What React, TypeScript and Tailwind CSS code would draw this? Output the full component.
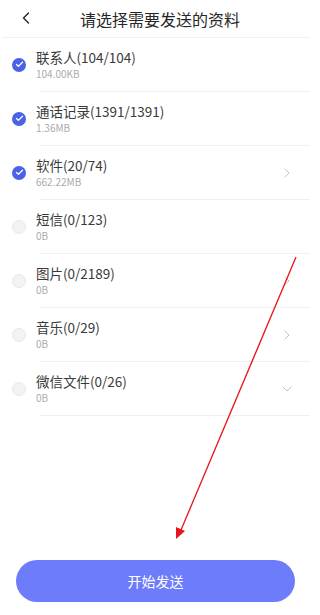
import { ChevronLeft, ChevronRight, ChevronDown, Check } from 'lucide-react';

type Item = { name: string; size: string; checked: boolean; tail: 'right' | 'down' | null };

const items: Item[] = [
  { name: '联系人(104/104)', size: '104.00KB', checked: true, tail: null },
  { name: '通话记录(1391/1391)', size: '1.36MB', checked: true, tail: null },
  { name: '软件(20/74)', size: '662.22MB', checked: true, tail: 'right' },
  { name: '短信(0/123)', size: '0B', checked: false, tail: null },
  { name: '图片(0/2189)', size: '0B', checked: false, tail: 'right' },
  { name: '音乐(0/29)', size: '0B', checked: false, tail: 'right' },
  { name: '微信文件(0/26)', size: '0B', checked: false, tail: 'down' },
];

function Row({ item }: { item: Item }) {
  return (
    <div>
      <div className="flex h-[53px] items-center pl-3 pr-[25px]">
        {item.checked ? (
          <div className="flex h-[14px] w-[14px] items-center justify-center rounded-full bg-[#4b62e4]">
            <Check size={9} strokeWidth={3.5} color="#ffffff" />
          </div>
        ) : (
          <div className="h-[14px] w-[14px] rounded-full border border-[#e8e8e8] bg-[#f3f3f3]" />
        )}
        <div className="ml-[10px] flex flex-1 flex-col gap-[2px]">
          <span className="text-[13.5px] leading-[16px] text-[#3a3a3a]">{item.name}</span>
          <span className="text-[10px] leading-[13px] text-[#ababab]">{item.size}</span>
        </div>
        {item.tail === 'right' && <ChevronRight size={16} strokeWidth={1.5} color="#c4c4c4" />}
        {item.tail === 'down' && <ChevronDown size={16} strokeWidth={1.5} color="#c4c4c4" />}
      </div>
      <div className="ml-[40px] mr-[10px] h-px bg-[#f0f0f0]" />
    </div>
  );
}

export default function App() {
  return (
    <div
      className="relative flex h-[615px] w-[320px] flex-col overflow-hidden bg-white"
      style={{ fontFamily: '"Noto Sans CJK SC", "Noto Sans", sans-serif' }}
    >
      <div className="relative flex h-[37px] items-center justify-center">
        <ChevronLeft size={20} strokeWidth={1.6} color="#222222" className="absolute left-[16px] top-[8px]" />
        <span className="text-[16px] leading-[20px] text-[#262626]">请选择需要发送的资料</span>
      </div>
      <div className="ml-[2px] mr-[10px] h-px bg-[#f0f0f0]" />

      {items.map((it) => (
        <Row key={it.name} item={it} />
      ))}

      <button className="mb-[13px] ml-4 mt-auto flex h-[42px] w-[279px] items-center justify-center rounded-full bg-[#6d7cfa] text-[14px] text-white">
        开始发送
      </button>

      {/* red annotation arrow */}
      <svg className="pointer-events-none absolute left-0 top-0" width={320} height={615}>
        <line x1={296} y1={257} x2={181} y2={530} stroke="#e8141b" strokeWidth={1.3} />
        <polygon points="176,539 176,527 185,531" fill="#e8141b" />
      </svg>
    </div>
  );
}
